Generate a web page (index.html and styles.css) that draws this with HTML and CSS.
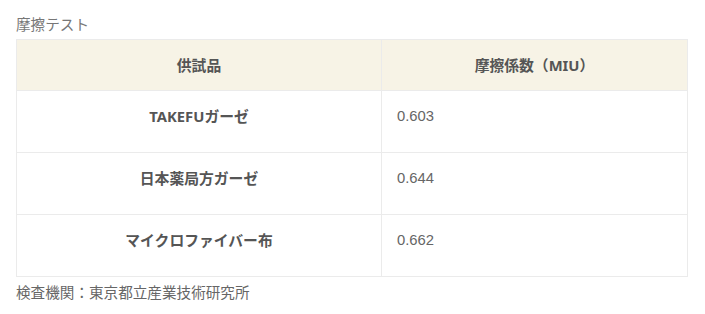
FILE: index.html
```html
<!DOCTYPE html>
<html lang="ja">
<head>
<meta charset="utf-8">
<link rel="stylesheet" href="styles.css">
</head>
<body>
<div class="wrap">
  <p class="caption">摩擦テスト</p>
  <table class="friction">
    <thead>
      <tr><th class="col-sample">供試品</th><th>摩擦係数（MIU）</th></tr>
    </thead>
    <tbody>
      <tr><th>TAKEFUガーゼ</th><td>0.603</td></tr>
      <tr><th>日本薬局方ガーゼ</th><td>0.644</td></tr>
      <tr><th>マイクロファイバー布</th><td>0.662</td></tr>
    </tbody>
  </table>
  <p class="note">検査機関：東京都立産業技術研究所</p>
</div>
</body>
</html>
```
FILE: styles.css
```css
html, body {
  margin: 0;
  padding: 0;
  background: #fff;
}
body {
  font-family: "Noto Sans", "Noto Sans CJK JP", sans-serif;
  color: #555;
  font-size: 14px;
}
.wrap {
  padding: 12px 17px 0 16px;
}
.caption {
  margin: 0 0 3px;
  font-size: 14.6px;
  line-height: 24px;
  color: #777;
}
.friction {
  width: 100%;
  border-collapse: collapse;
  table-layout: fixed;
}
.friction th,
.friction td {
  border: 1px solid #ebebeb;
  font-size: 14.8px;
  line-height: 24px;
}
.friction thead th {
  background: #f7f3e6;
  font-weight: bold;
  padding: 13px 16px 13px;
  text-align: center;
  color: #555;
}
.friction .col-sample {
  width: 332px;
}
.friction tbody th {
  font-weight: bold;
  text-align: center;
  padding: 13px 16px 24px;
}
.friction tbody td {
  text-align: left;
  padding: 13px 15px 24px;
  font-family: "Liberation Sans", "Noto Sans CJK JP", sans-serif;
  color: #666;
}
.note {
  margin: 3px 0 0;
  font-size: 14.6px;
  line-height: 24px;
  color: #666;
}
```
